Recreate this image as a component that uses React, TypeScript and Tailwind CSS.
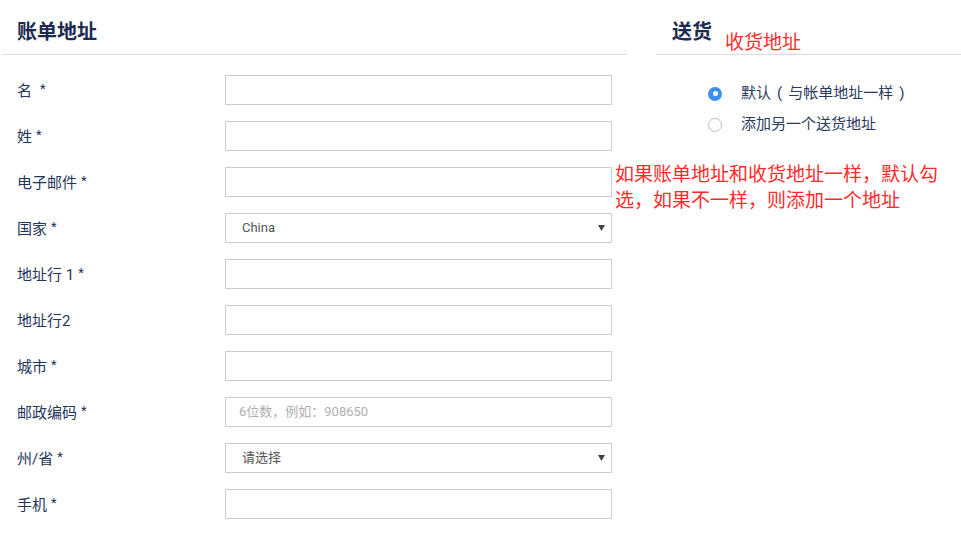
const fields = [
  { label: "名", star: true, gap: true },
  { label: "姓", star: true },
  { label: "电子邮件", star: true },
  { label: "国家", star: true, select: "China" },
  { label: "地址行 1", star: true },
  { label: "地址行2" },
  { label: "城市", star: true },
  { label: "邮政编码", star: true, placeholder: "6位数，例如：908650" },
  { label: "州/省", star: true, select: "请选择" },
  { label: "手机", star: true },
];

const font = { fontFamily: '"Roboto", "Noto Sans CJK SC", sans-serif' };

const Caret = () => (
  <svg width="7" height="6" viewBox="0 0 7 6" className="mr-[6px]">
    <path d="M0 0H7L3.5 6Z" fill="#444444" />
  </svg>
);

const Field = ({ f }: { f: (typeof fields)[number] }) => (
  <div className="flex h-[30px] items-center">
    <div className="w-[223px] shrink-0 pl-[15px] pt-[3px] text-[15px] text-[#24355a]">
      {f.label}
      {f.star && (
        <span className={`relative -top-[3px] text-[13px] ${f.gap ? "ml-[8px]" : "ml-[4px]"}`}>*</span>
      )}
    </div>
    <div className="flex h-[30px] w-[387px] items-center justify-between border border-[#cccccc] bg-white">
      {f.select ? (
        <>
          <span className="pl-[16px] text-[13px] text-[#555555]">{f.select}</span>
          <Caret />
        </>
      ) : f.placeholder ? (
        <span className="pl-[13px] text-[13px] text-[#b0b0b0]">{f.placeholder}</span>
      ) : null}
    </div>
  </div>
);

const App = () => {
  return (
    <div className="relative flex h-[540px] w-[961px] bg-white" style={font}>
      <div className="ml-[2px] w-[625px]">
        <div className="h-[55px] border-b border-[#dcdcdc] pl-[15px] pt-[19px]">
          <h2 className="text-[20px] font-bold leading-[26px] text-[#1b2a4e]">账单地址</h2>
        </div>
        <div className="flex flex-col gap-[16px] pt-[20px]">
          {fields.map((f) => (
            <Field key={f.label} f={f} />
          ))}
        </div>
      </div>
      <div className="ml-[30px] flex-1">
        <div className="flex h-[55px] border-b border-[#dcdcdc] pl-[15px] pt-[19px]">
          <h2 className="text-[20px] font-bold leading-[26px] text-[#1b2a4e]">送货</h2>
          <span className="relative top-[11px] ml-[13px] text-[19px] leading-[26px] text-[#ff2b2b]">收货地址</span>
        </div>
        <div className="flex flex-col gap-[10px] pl-[51px] pt-[28px]">
          <label className="flex items-center gap-[19px] text-[15px] leading-[21px] text-[#2a3a5c]">
            <span className="flex h-[14px] w-[14px] items-center justify-center rounded-full bg-[#3d8ef5]">
              <span className="h-[5px] w-[5px] rounded-full bg-white" />
            </span>
            <span>
              默认<span className="mx-[6px]">(</span>与帐单地址一样<span className="mx-[6px]">)</span>
            </span>
          </label>
          <label className="flex items-center gap-[19px] text-[15px] leading-[21px] text-[#2a3a5c]">
            <span className="h-[14px] w-[14px] rounded-full border border-[#bdbdbd] bg-white" />
            添加另一个送货地址
          </label>
        </div>
      </div>
      <p className="absolute left-[615px] top-[162px] w-[330px] text-[19px] leading-[26px] text-[#ff2b2b]">
        如果账单地址和收货地址一样，默认勾选，如果不一样，则添加一个地址
      </p>
    </div>
  );
};

export default App;
